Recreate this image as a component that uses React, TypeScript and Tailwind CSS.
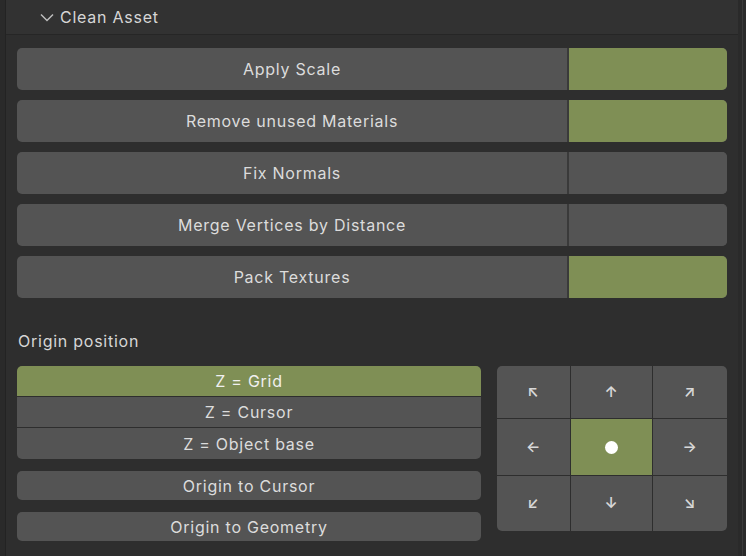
const rows = [
  { label: "Apply Scale", on: true },
  { label: "Remove unused Materials", on: true },
  { label: "Fix Normals", on: false },
  { label: "Merge Vertices by Distance", on: false },
  { label: "Pack Textures", on: true },
];

const arrows = ["↖", "↑", "↗", "←", "●", "→", "↙", "↓", "↘"];

export default function App() {
  return (
    <div
      className="flex h-[556px] w-[746px] bg-[#2b2b2b] text-[16px] tracking-[0.75px] text-[#dcdcdc]"
      style={{ fontFamily: "Inter, 'DejaVu Sans', sans-serif" }}
    >
      <div className="w-[6px] border-r border-[#232323] bg-[#2a2a2a]" />
      <div className="flex flex-1 flex-col">
        {/* header */}
        <div className="flex h-[35px] items-center gap-[6px] border-b border-[#262626] bg-[#323232] pl-[34px]">
          <svg width="14" height="9" viewBox="0 0 14 9" className="mt-[1px]">
            <polyline points="1,1.5 7,7.5 13,1.5" fill="none" stroke="#bdbdbd" strokeWidth="1.5" />
          </svg>
          <span className="text-[16px] text-[#d6d6d6]">Clean Asset</span>
        </div>

        <div className="flex flex-1 flex-col bg-[#2e2e2e] px-[11px] pt-[13px]">
          <div className="flex flex-col gap-[10px]">
            {rows.map((r) => (
              <div key={r.label} className="flex h-[42px] overflow-hidden rounded-[5px] bg-[#545454]">
                <div className="flex flex-1 items-center justify-center">{r.label}</div>
                <div
                  className={
                    r.on
                      ? "w-[160px] border-l-2 border-[#3a3a3a] bg-[#7f8f55]"
                      : "w-[160px] border-l-2 border-[#3a3a3a] bg-[#545454]"
                  }
                />
              </div>
            ))}
          </div>

          <div className="mt-[31px] pl-[1px] text-[#d6d6d6]">Origin position</div>

          <div className="mt-[13px] flex gap-[16px]">
            <div className="flex w-[464px] flex-col">
              <div className="flex flex-col gap-[1px] overflow-hidden rounded-[5px] bg-[#2e2e2e]">
                <div className="flex h-[30px] items-center justify-center bg-[#7f8f55] text-[#f0f0f0]">Z = Grid</div>
                <div className="flex h-[30px] items-center justify-center bg-[#545454]">Z = Cursor</div>
                <div className="flex h-[31px] items-center justify-center bg-[#545454]">Z = Object base</div>
              </div>
              <div className="mt-[12px] flex h-[29px] items-center justify-center rounded-[5px] bg-[#545454]">
                Origin to Cursor
              </div>
              <div className="mt-[12px] flex h-[29px] items-center justify-center rounded-[5px] bg-[#545454]">
                Origin to Geometry
              </div>
            </div>

            <div className="grid h-[165px] w-[230px] grid-cols-[73px_81px_1fr] grid-rows-[52px_56px_1fr] gap-[1px] overflow-hidden rounded-[5px] bg-[#2e2e2e]">
              {arrows.map((a, i) => (
                <div
                  key={i}
                  className={
                    i === 4
                      ? "flex items-center justify-center bg-[#7f8f55] text-[#ffffff]"
                      : "flex items-center justify-center bg-[#545454] text-[15px] font-semibold text-[#d8d8d8]"
                  }
                >
                  {i === 4 ? <span className="h-[13px] w-[13px] rounded-full bg-white" /> : a}
                </div>
              ))}
            </div>
          </div>
        </div>
      </div>
      <div className="flex w-[8px] bg-[#2a2a2a]">
        <div className="ml-[4px] w-[1px] bg-[#3a3a3a]" />
      </div>
    </div>
  );
}
